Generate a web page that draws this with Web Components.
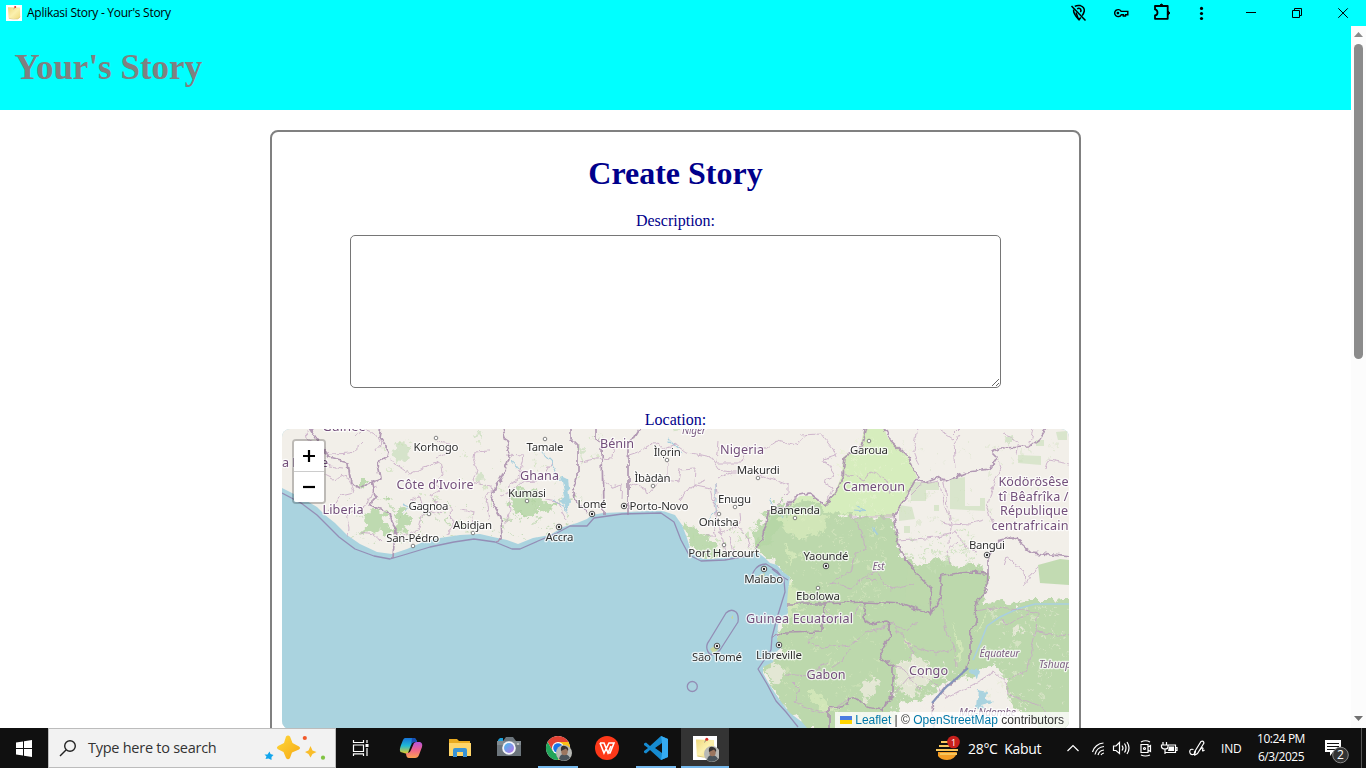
<!DOCTYPE html>
<html lang="id">
<head>
<meta charset="utf-8">
<title>Aplikasi Story - Your's Story</title>
<style>
html,body{margin:0;height:100%;overflow:hidden;background:#fff}
body{font-family:"Liberation Serif",serif}
</style>
</head>
<body>
<story-desktop></story-desktop>
<script>
const define = (name, html, after) => customElements.define(name, class extends HTMLElement {
  constructor() {
    super();
    const t = document.createElement('template');
    t.innerHTML = html;
    this.attachShadow({mode: 'open'}).append(t.content.cloneNode(true));
    if (after) after(this.shadowRoot, this);
  }
});

define('note-icon', `<style>:host{display:block;width:16px;height:16px}svg{display:block;width:100%;height:100%}</style>
<svg viewBox="0 0 16 16"><defs><linearGradient id="n" x1="0" y1="0" x2="1" y2="1"><stop offset="0" stop-color="#eed77c"/><stop offset=".5" stop-color="#fbf0ae"/><stop offset="1" stop-color="#f0da7c"/></linearGradient></defs>
<rect width="16" height="16" fill="#fff"/><path d="M2 2.300 14 2.600 14.200 11.800Q13.500 13.600 11.600 14L2.600 13.600Z" fill="url(#n)"/><path d="M3 13.300Q7 14.600 11.600 14L14.200 11.800" fill="none" stroke="#cfb862" stroke-width=".5"/><path d="M8.600 2.700 7.700 4.300" stroke="#777" stroke-width=".5"/><circle cx="9.200" cy="2.100" r="1" fill="#d92a25"/></svg>`);

define('title-bar', `<style>
:host{display:flex;height:26px;background:#0ff;align-items:center;color:#000}
note-icon{margin-left:6px}
.t{margin-left:5px;font:12px/16px "Open Sans",sans-serif;letter-spacing:-.27px;white-space:nowrap;flex:1}
svg{display:block}
</style><note-icon></note-icon><span class="t">Aplikasi Story - Your's Story</span>
<svg width="296" height="26" viewBox="1070 0 296 26" fill="none" stroke="#000">
<g stroke-width="1.500"><path d="M1071.500 6 1085.500 20.500"/><path d="M1074.800 6.400Q1077 5 1080.300 5.600 1084.600 7 1084.300 11 1083.800 13.300 1082.200 15.600M1080.800 17.500 1079 19.800Q1073 13.500 1073.600 9.500"/><path d="M1077.200 9Q1078.800 7.600 1080.500 9 1081.600 10.800 1080.300 12M1076 12.500 1078.300 19"/></g>
<g stroke-width="1.400"><path d="M1121.200 11.400A3.500 3.500 0 1 0 1121.200 14.800H1123.300V16H1125.500V14.800H1127.800V11.400Z"/><circle cx="1117.900" cy="13.100" r="1.400" fill="#000" stroke="none"/></g>
<path d="M1155 6H1167.700V18.800H1155V15.500Q1157.500 15 1157.500 12.700 1157.500 10 1155 9.400Z" stroke-width="1.800" stroke-linejoin="round"/><path d="M1159.500 5.500Q1161.500 2.600 1163.300 5.500ZM1168 11Q1171.300 13 1168 15Z" fill="#000"/>
<g fill="#000" stroke="none"><circle cx="1201.500" cy="8.400" r="1.600"/><circle cx="1201.500" cy="13.500" r="1.600"/><circle cx="1201.500" cy="18.500" r="1.600"/></g>
<path d="M1246 12.500H1256M1292.500 10.500H1299.500V17.500H1292.500ZM1294.500 10.500V8.500H1301.500V15.500H1299.500M1338.300 8.300 1347.800 17.800M1347.800 8.300 1338.300 17.800"/></svg>`);

define('app-header', `<style>:host{display:flex;align-items:center;height:84px;background:#0ff;padding-left:14.500px}
h1{margin:0;color:#808080;font:bold 35px/40px "Liberation Serif",serif;white-space:nowrap}</style><h1><slot></slot></h1>`);

define('page-scrollbar', `<style>:host{display:flex;flex-direction:column;width:15px;background:#fcfcfc;align-items:center}
.th{width:9px;height:315px;border-radius:5px;background:#8b8b8b}.g{flex:1}svg{display:block;height:18px}</style>
<svg width="15" height="18"><path d="M3 11 7.500 6 12 11Z" fill="#8b8b8b"/></svg><div class="th"></div><div class="g"></div><svg width="15" height="18"><path d="M3 6 7.500 11 12 6Z" fill="#707070"/></svg>`);

define('form-field', `<style>:host{display:flex;flex-direction:column;align-items:center}
label{font:16px/18px "Liberation Serif",serif;color:#00008b}</style><label></label><slot></slot>`, (r, h) => { r.querySelector('label').textContent = h.getAttribute('label'); });

define('story-textarea', `<style>:host{display:block;margin-top:5px}
textarea{display:block;box-sizing:border-box;width:651px;height:153px;margin:0;border:1px solid #767676;border-radius:5px;background:#fff;outline:0;resize:vertical}</style><textarea aria-label="Description"></textarea>`);

define('map-zoom', `<style>:host{display:flex;flex-direction:column;border:2px solid rgba(0,0,0,.22);border-radius:4px;background-clip:padding-box}
b{display:flex;align-items:center;justify-content:center;width:30px;height:30px;background:#fff;border-radius:0 0 2px 2px}
b:first-of-type{border-bottom:1px solid #ccc;border-radius:2px 2px 0 0}</style>
<b><svg width="14" height="14"><path d="M1 7H13M7 1V13" stroke="#000" stroke-width="2.200"/></svg></b><b><svg width="14" height="14"><path d="M1 7H13" stroke="#000" stroke-width="2.200"/></svg></b>`);

define('map-credit', `<style>:host{display:flex;align-items:center;height:16px;padding:0 5px;background:rgba(255,255,255,.8);font:12px/16px "Liberation Sans",sans-serif;color:#333;white-space:pre}
a{color:#0078a8}svg{margin-right:3px}</style><svg width="12" height="8"><path fill="#4c7be1" d="M0 0h12v4H0z"/><path fill="#ffd500" d="M0 4h12v4H0z"/></svg><a>Leaflet</a><span> | © </span><a>OpenStreetMap</a><span> contributors</span>`);

const SEA = 'M282 488 300 497 317 507 325 515 335 523 347 535 360 544 377 552 392 554 407 549 423 542 440 538 460 535 480 534 493 537 507 540 518 544 533 538 550 535 563 527 577 523 587 519 592 515 603 513 627 512 647 511 663 511 675 515 682 525 687 538 690 548 695 555 703 559 713 559 727 557 747 555 757 552 765 558 770 563 777 565 783 572 790 577 788 590 787 603 788 613 778 625 777 640 782 647 775 653 773 662 763 667 763 673 768 682 775 693 782 703 790 713 802 722 807 728H282Z';
const GREEN = 'M783 510 802 500 819 505 829 513 850 516 892 517 897 545 908 562 925 563 940 558 955 566 967 563 980 568 987 573 987 592 983 605 1000 600 1013 605 1031 600 1052 600 1072 598V731H1040L1030 715 1010 707 1006 680 993 664 984 668 969 678 953 682 945 683 936 692 920 700 902 703 886 731H807L802 722 790 713 775 693 763 667 773 662 782 647 777 640 778 625 788 613 787 603 790 577 777 565 768 558 756 549 763 537 770 512Z';
const LIGHT = 'M865 426 860 447 843 457 842 475 835 492 823 505 812 496 800 496 789 505 780 512 783 525 795 520 804 531 835 515 892 517 903 502 917 477 908 457 888 438 883 426Z';

define('story-map', `<style>
:host{display:grid;width:787px;height:300px;border-radius:8px;overflow:hidden;position:relative;background:#aad3df}
svg{display:block}
map-zoom{position:absolute;left:10px;top:10px}
map-credit{position:absolute;right:0;top:283px}
text{font-family:"Noto Sans","Open Sans",sans-serif;fill:#303030;paint-order:stroke;stroke:#fff;stroke-opacity:.75;stroke-width:2.500px;stroke-linejoin:round;text-anchor:middle}
</style>
<svg width="787" height="299" viewBox="282 429 787 299">
<defs>
<filter id="rough" filterUnits="userSpaceOnUse" x="270" y="415" width="810" height="325"><feTurbulence type="fractalNoise" baseFrequency=".11" numOctaves="3" seed="4" result="n"/><feDisplacementMap in="SourceGraphic" in2="n" scale="7" xChannelSelector="R" yChannelSelector="G"/></filter>
<filter id="ragged" filterUnits="userSpaceOnUse" x="270" y="415" width="810" height="325"><feTurbulence type="fractalNoise" baseFrequency=".13" numOctaves="4" seed="9" result="n"/><feDisplacementMap in="SourceGraphic" in2="n" scale="15" xChannelSelector="R" yChannelSelector="G"/></filter>
</defs>
<rect x="282" y="429" width="787" height="299" fill="#f2efe9"/>
<path d="${LIGHT}" fill="#d6edbd"/>
<g filter="url(#ragged)"><path d="${GREEN}" fill="#bcd8ac"/>
<g fill="#b5d6a6" opacity=".85"><path d="M508 493 525 487 541 493 542 504 533 518 517 515 509 508ZM364 513 378 509 387 514 382 522 393 529 397 524 403 530 388 534 373 532 362 535ZM384 498 390 496 392 501 386 503ZM395 511 403 508 409 518 408 532 397 526ZM358 480 367 480 366 485 358 487ZM541 503 552 501 551 512 541 509ZM683 523 704 534 717 543 722 553 733 557 703 558 690 547ZM762 512 772 507 783 498 784 524 766 545 756 547 754 526 768 522Z"/>
<path d="M396 442 407 444 409 457 402 463 392 454ZM472 432 480 434 479 439ZM476 473 482 472 484 480 477 479ZM670 426H683L678 432ZM579 452 583 446 582 466ZM1004 435 1012 438 1010 446Z" opacity=".55"/></g>
<g id="tex"></g></g>
<path d="M1018 455 1041 456V465L1018 463ZM950 479 965 477V506H980V498H985V511L950 509ZM910 482 939 482V490H926V501H911ZM934 505H939V511H934ZM899 505 912 507 915 519 899 521ZM904 526H910V533H904ZM1036 440H1044V446H1036ZM1056 432 1067 431V440H1058Z" fill="#c5ddb5" opacity=".55"/>
<path d="M1038 565 1060 559 1069 560V585L1040 583ZM908 566 912 570 930 587V608L905 600Z" fill="#bcd8ac" opacity=".9"/>
<path d="${SEA}" fill="#aad3df"/>
<g fill="none" stroke="#a4cddd" stroke-width="1.100" filter="url(#rough)"><path d="M540 451 552 463 557 477 563 481 567 500 569 511 554 500M511 460 519 469M402 515 410 506 402 503M856 505 865 511 855 510M667 438 672 443 683 453M716 483V510L709 520M769 498 778 510 783 518M872 527 878 536"/></g>
<path d="M1072 604H1035L1017 609 1000 617 987 626 980 644 973 660" fill="none" stroke="#a9cfe0" stroke-width="1.500"/>
<g fill="#aad3df" filter="url(#rough)"><path d="M561 476 567 479 570 503 567 509 559 500 565 497ZM972 668 979 670 977 678 970 674ZM977 690 988 692 986 698 993 703 982 706 985 710 975 707Z"/></g>
<g fill="none" stroke="#c6a8c5" stroke-width=".9" opacity=".9" filter="url(#rough)">
<path d="M306 429 307 440 323 447 330 454 352 453 364 442M355 436 362 430 374 434 382 444 376 451M320 457 329 466 344 468M322 474 334 480 346 475 354 491 341 494 335 504 328 512M349 537 350 528 347 510 356 513 367 505 374 488 378 487M359 532 373 534 382 542M390 461 401 467 411 474 423 468 440 462 442 473 435 479 439 491 431 495 436 504M410 500 420 497 424 512 420 528 402 537M430 510 442 513 451 506 452 526 448 534M460 509 474 512 472 523 481 527 479 531M489 520 486 498 493 488 474 481 478 470 473 460 474 452 490 451M438 441 449 443 448 453 438 458M506 455 523 456 518 480 508 486M501 496 508 493 521 482 538 481 546 473 552 463M545 500 557 502 567 520M509 493 511 511 504 527M580 462 601 458M602 457 613 458 614 448M602 479 613 487 623 484 622 500M626 456 638 452 656 442 664 449 676 444 687 452 710 457 718 469 731 471M628 482 645 489 647 495 662 479 678 482 680 470 697 469 696 485 710 488 712 500 721 509M667 463 667 480M680 501 690 487 705 481M718 441 716 463 741 463 744 452M718 479 731 472 754 472 788 485 788 494 777 505M716 483 717 494 714 503 717 521 722 532 741 524 740 514M720 531 725 552M730 537 734 554M738 525 745 533 750 548M704 535 716 535 711 523M746 447 767 448 778 440 796 445 808 434M800 435 821 434 833 449 836 456 824 460 834 476 823 482 833 488 827 500M842 472 855 477 864 481 871 472 888 480 890 493M850 517 892 517M917 429 913 450 919 466M954 445 956 469M960 434 953 443M1003 434 1019 441 1016 454M1045 470 1048 460 1069 464M997 458 1001 470 993 485 987 508 993 525M943 477 947 499 950 519M900 505 920 485 939 481 943 500 950 523 971 524 985 520M940 521 950 524 949 544M899 540 937 537 957 532 966 547 978 551M957 542 947 551 950 565M850 517 856 522 862 533 865 548 855 554 850 572 829 583M831 582 850 588 864 577 875 571 890 590 915 584M825 609 833 618 852 617 862 605M815 632 808 642 823 648 850 645 866 632 893 624 906 631 918 623M867 577 876 583M940 598 946 632 955 647 956 668M953 648 936 654 907 643 896 628M905 640 915 654 908 660M976 611 993 608 1023 610 1037 614 1036 632 1069 636M1036 632 1030 655 1026 672 1008 679M1002 617 1003 625 1030 614M893 695 909 677 924 676 939 688 946 699 976 683 993 672 1007 685 1008 695 1036 704 1048 714 1069 720M893 667 903 668 920 690M940 430 952 438 959 431M1033 429 1029 446M1024 588 1030 575 1039 569M850 649 843 661 831 668M786 674 807 676 828 663M792 682 800 690 793 703 803 707 826 713 852 697M1003 565 1006 556 1024 570 1025 585"/>
</g>
<g fill="none" stroke="#ab8fae" stroke-width="1.700" stroke-linejoin="round" opacity=".9" filter="url(#rough)">
<path d="M308 426 323 448 330 458 348 463 351 483 360 488 380 478 377 463 387 457 388 450 380 438 382 426M372 480 375 497 370 505 390 512 392 522 396 528 394 558M502 426 510 452 502 476 493 492 492 502 501 517 502 539 495 541M570 426 570 438 577 445 577 478 573 488 575 498 588 514M595 426 595 437 602 442 603 515M641 426 628 448 628 514M867 426 862 447 845 457 843 475 836 492 824 505 809 493 796 496 788 505 770 512 763 535 757 548M883 426 888 438 908 457 917 477 903 502 893 516 897 535 900 550 908 562 915 573 930 587 931 615 940 597 942 575 970 572 988 573 987 590 977 602 975 620 970 637 970 657 967 668 957 678 945 688 932 703 934 731M917 480 925 483 940 477 947 481 967 472 990 469 998 457 993 452 1000 448 1028 447 1040 438 1048 426M988 573V557L1000 540 1013 537 1032 553 1072 557M788 604H822L865 602 903 604 931 614M865 603 863 617 868 625 888 623 892 637 880 650 882 658 893 667V697L885 703 882 710 867 707 857 697 848 699 847 705 829 708 829 731M823 604V631L786 632 772 638"/>
</g>
<g fill="none" stroke="#9186b1" stroke-width="1.300" stroke-linejoin="round" opacity=".9"><path d="M282 493 301 503 317 515 339 537 355 549 374 556 390 559 407 554 430 547 454 542 474 539 495 542 512 549 520 549 538 541 557 533 570 526 587 526 594 518 622 514 661 513 674 522 681 540 689 555 701 561 725 560 752 555M751 577 754 571Q758 564 766 564L777 571 784 580 785 592 777 618 772 637 771 650 758 669 767 684 776 701 786 712 798 727M772 569 781 576 788 580"/>
<path d="M726 613Q731 608 736 612 739 615 738 622L720 650Q710 660 707 649 706 645 709 641Z"/><circle cx="692.300" cy="686.500" r="5"/></g>
<path d="M932 703 945 688 957 678 968 668" fill="none" stroke="#8494bb" stroke-width="2"/>
<path d="M710 649 716 645 718 650 713 653ZM731 618 733 615 733 619ZM758 576 765 573 762 582Z" fill="#c8d69d"/>
<g id="dots"></g><g id="labels"></g>
</svg><map-zoom></map-zoom><map-credit></map-credit>`, r => {
  const NS = 'http://www.w3.org/2000/svg';
  const el = (n, a, p) => { const e = document.createElementNS(NS, n); for (const k in a) e.setAttribute(k, a[k]); p.append(e); return e; };
  // Small woodland and clearing patches scattered over the land.
  let s = 7; const rnd = () => (s = (s * 16807) % 2147483647) / 2147483647;
  const tex = r.getElementById('tex');
  const scatter = (n, x, y, w, h, fill, o) => { let d = ''; for (let i = 0; i < n; i++) { const a = x + rnd() * w, b = y + rnd() * h, q = .7 + rnd() * 2.3; d += `M${a.toFixed(1)} ${b.toFixed(1)}l${q.toFixed(1)} ${(rnd() * 2 - 1).toFixed(1)} ${(rnd() * 2).toFixed(1)} ${q.toFixed(1)} ${(-q).toFixed(1)} ${rnd().toFixed(1)}z`; } el('path', {d, fill, opacity: o}, tex); };
  scatter(90, 340, 495, 240, 50, '#add19e', .6);
  scatter(45, 380, 435, 220, 60, '#c8e0b5', .6);
  scatter(50, 682, 520, 75, 36, '#b9dba8', .6);
  scatter(150, 790, 515, 95, 100, '#dbe9c3', .55);
  scatter(90, 780, 620, 100, 105, '#dbeac2', .45);
  scatter(110, 985, 605, 84, 100, '#e2ead0', .6);
  scatter(80, 900, 530, 75, 40, '#c8dfb8', .7);
  scatter(60, 900, 440, 160, 80, '#d5e4c6', .5);
  scatter(60, 890, 660, 65, 55, '#f2efe9', .8);
  scatter(70, 835, 440, 70, 75, '#e4f2cd', .6);
  el('path', {d: 'M865 683 873 676 880 682 874 692 868 700 860 695ZM893 667 915 657 930 663 935 674 921 690 902 698ZM766 670 779 665 785 672 774 687ZM1010 630 1020 628 1024 632 1015 635Z', fill: '#f0ece2', opacity: .75}, tex);
  el('path', {d: 'M780 520 800 512 830 515 826 530 800 540 785 530ZM780 572 793 580 797 606 790 620 787 600ZM805 690 817 692 828 704 840 709 823 711ZM952 620 958 645 957 668 963 650ZM785 545 800 553 790 565ZM990 611 984 620 975 635 980 622ZM903 636 912 644 906 646Z', fill: '#dceebf', opacity: .65}, tex);
  const dots = r.getElementById('dots');
  [[436, 438], [545, 439], [527, 501], [429, 514], [473, 533], [413, 546], [667, 460], [653, 486], [758, 478], [735, 507], [719, 514], [724, 545], [869, 441], [795, 518], [818, 588]].forEach(([x, y]) => el('circle', {cx: x, cy: y, r: 1.8, fill: '#fff', stroke: '#666', 'stroke-width': .8}, dots));
  [[559, 527], [592, 514], [624, 506], [764, 569], [826, 566], [987, 555], [717, 646], [779, 645]].forEach(([x, y]) => { el('circle', {cx: x, cy: y, r: 2.8, fill: '#fff', stroke: '#444', 'stroke-width': .9}, dots); el('circle', {cx: x, cy: y, r: 1.2, fill: '#222'}, dots); });
  const labels = r.getElementById('labels');
  const put = (list, attrs) => list.forEach(([t, x, y, w, anchor]) => { const e = el('text', {x, y, textLength: w, ...attrs}, labels); if (anchor) e.style.textAnchor = anchor; if (attrs.fill) e.style.fill = attrs.fill; e.textContent = t; });
  put([['Korhogo', 436, 450.5, 45], ['Tamale', 545, 451, 37], ['Kumasi', 527, 497, 38], ['Gagnoa', 428.5, 510, 40], ['Abidjan', 472.5, 528.5, 39], ['San-Pédro', 412.7, 541.5, 53], ['Accra', 559.5, 541, 28], ['Lomé', 592, 508, 29], ['Ìlọrin', 667.3, 456, 27], ['Ìbàdàn', 652.5, 481.5, 36], ['Porto-Novo', 659, 509.7, 59], ['Makurdi', 758.3, 473.5, 43], ['Enugu', 734.5, 503, 33], ['Onitsha', 718.7, 526, 40], ['Port Harcourt', 723.7, 557, 71], ['Bamenda', 795, 514, 50], ['Malabo', 763.7, 583.3, 39], ['Garoua', 869, 453.7, 38], ['Yaoundé', 826, 560, 45], ['Bangui', 987, 548.7, 36], ['Ebolowa', 818, 600, 44], ['São Tomé', 717, 661, 50], ['Libreville', 779, 659.3, 46]], {'font-size': 11.5});
  put([['Guinée', 344, 431, 43], ['Côte d’Ivoire', 435, 488.7, 77], ['Liberia', 343, 513.7, 41], ['Ghana', 539.5, 479.7, 39], ['Bénin', 617, 448, 34], ['Nigeria', 742, 454, 44], ['Cameroun', 874, 490.7, 62], ['Guinea Ecuatorial', 799.5, 622.7, 107], ['Gabon', 826, 679.3, 39], ['Congo', 928.5, 675.3, 39], ['Ködörösêse', 1068.5, 485.5, 70, 'end'], ['tî Bêafrîka /', 1068.5, 500.5, 70, 'end'], ['République', 1068, 515.3, 68, 'end'], ['centrafricain', 1068.5, 530.3, 77, 'end'], ['a Leone', 282, 467, 46, 'start']], {'font-size': 12.6, fill: '#734f7b'});
  put([['Niger', 694, 434, 24], ['Est', 878.5, 570, 12], ['Équateur', 999.5, 657, 40], ['Tshuapa', 1039, 668, 38, 'start'], ['Mai-Ndombe', 987.5, 716, 57]], {'font-size': 10.4, 'font-style': 'italic', fill: '#7d5f83'});
});

define('story-card', `<style>:host{display:flex;flex-direction:column;align-items:center;box-sizing:border-box;width:811px;height:900px;border:2px solid #808080;border-radius:8px;padding:0 10px;background:#fff}
h2{margin:23px 0 21px;font:bold 32px/36px "Liberation Serif",serif;color:#00008b}
form-field+form-field{margin-top:23px}</style>
<h2>Create Story</h2><form-field label="Description:"><story-textarea></story-textarea></form-field><form-field label="Location:"><story-map></story-map></form-field>`);

define('search-box', `<style>:host{display:flex;box-sizing:border-box;width:288px;height:40px;border:1px solid #bcbcbc;background:#f2f2f2;align-items:center;padding-left:10px}
span{font:14.500px/20px "Open Sans",sans-serif;letter-spacing:-.26px;color:#333;margin-left:11px;flex:1;white-space:nowrap}svg{display:block}.s{margin-right:9px}</style>
<svg width="18" height="18" fill="none" stroke="#222" stroke-width="1.400"><circle cx="11" cy="7" r="5.300"/><path d="M7 11 1 17"/></svg><span>Type here to search</span>
<svg class="s" width="62" height="30" viewBox="264 733 62 30"><defs><linearGradient id="y" x2="1" y2="1"><stop stop-color="#ffd83b"/><stop offset="1" stop-color="#f5a914"/></linearGradient></defs><path fill="url(#y)" d="M286 736.500Q288 734.500 290 736.500L292.500 743 299 746.500Q301 748 299 749.500L292 752.500 290 758Q288 760.500 286 758L283.500 752 277.500 749Q276 747.500 278 746L284 743Z"/><path fill="#f9bd2a" d="M310.500 746 312.500 750.500 316.500 752 312.500 754 310.500 757.500 308.500 754 305 752 308.500 750.500Z"/><path d="M269.500 751.500 270.500 754 273.500 755 271.500 757 271.500 760 268.500 758.500 265.500 759 266.500 756.500 264.500 754.500 267.500 754.500Z" fill="#12a5ec"/><circle cx="304.800" cy="738" r="2.100" fill="#f1592a"/><circle cx="323" cy="757.700" r="2.100" fill="#80c342"/></svg>`);

define('task-button', `<style>:host{display:flex;align-items:center;justify-content:center;box-sizing:border-box;width:49px;height:40px}
:host([open]){background:linear-gradient(#76b9ed,#76b9ed) center bottom/40px 2px no-repeat}
:host([active]){background:linear-gradient(#76b9ed,#76b9ed) bottom/100% 2px no-repeat,#343434;width:48px}</style><slot></slot>`);

const AVATAR = '<circle cx="19" cy="19" r="8" fill="#b8b9b5"/><path d="M14 25Q15 20 19 20T25 24Q19 29 14 25" fill="#4a545b"/><ellipse cx="19.500" cy="17" rx="3.300" ry="4.300" fill="#9b765f"/><path d="M16 17Q15 11 20 12 24 13 23 17L21 14.500Z" fill="#373333"/>';
define('task-bar', `<style>:host{display:flex;height:40px;background:#101010;color:#fff;font-family:"Open Sans",sans-serif}
svg{display:block}.start{width:48px;display:flex;align-items:center;justify-content:center}
.apps{display:flex;flex:1}.tray{display:flex;align-items:center}
.w{font-size:14px;letter-spacing:-.3px;white-space:pre;width:85px}.l{font-size:12px;width:30px;letter-spacing:-.2px;margin-left:1px}
.c{font-size:12px;line-height:18px;text-align:center;width:60px;letter-spacing:-.48px;white-space:nowrap}.n{margin-left:12px;margin-right:11px}.e{height:40px;border-left:1px solid #555;width:4px}
.app{width:28px;height:28px;position:relative;display:block}.app note-icon{width:24px;height:24px;margin:2px}.app svg{position:absolute;left:0;top:0}
</style>
<div class="start"><svg width="17" height="17" fill="#fff"><path d="M0 2.500 7 1.500V8H0ZM8 1.300 16 0V8H8ZM0 9H7V15.500L0 14.500ZM8 9H16V17L8 15.700Z"/></svg></div><search-box></search-box>
<div class="apps">
<task-button><svg width="18" height="18" fill="none" stroke="#fff" stroke-width="1.200"><path d="M1.500 1V3.500H11.500V1M1.500 6H11.500V12.500H1.500ZM1.500 17V14.800H11.500V17M15 1V4M15 9V17"/><path d="M13.500 5H16.500V8H13.500Z" fill="#fff" stroke="none"/></svg></task-button>
<task-button style="width:51px"><svg width="24" height="24" viewBox="0 0 24 24"><defs><linearGradient id="a" y2="1" x2="0"><stop stop-color="#1773d9"/><stop offset=".5" stop-color="#20b9d6"/><stop offset="1" stop-color="#e3cb25"/></linearGradient><linearGradient id="b" y2="1" x2="0"><stop stop-color="#b454e0"/><stop offset=".5" stop-color="#f0638b"/><stop offset="1" stop-color="#fca04f"/></linearGradient></defs><path d="M6 2H15Q17 2 18 6H15Q13 6 12 9L9 17Q8 18 5 17L1.500 16Q0 14 2 9L4 4Q5 2 6 2" fill="url(#a)"/><path d="M18 6H21Q24 7 23 11L20 19Q19 22 16 22H10Q7 22 7 17H9Q11 17 12 14L15 7Q16 6 18 6" fill="url(#b)"/><path d="M13 2H15Q17 2 18 6H15Q13 6 12 9Z" fill="#174fb4"/></svg></task-button>
<task-button style="width:48px"><svg width="22" height="20"><path d="M0 1H8L10 3H21V18H0Z" fill="#e9aa20"/><path d="M0 5H22V18H0Z" fill="#ffd569"/><path d="M4 19V12Q4 10 6 10H16Q18 10 18 12V19H14V14H8V19Z" fill="#3993d5"/></svg></task-button>
<task-button><svg width="26" height="22"><path d="M2 3 4 1H7V5H2Z" fill="#1aa0da"/><path d="M10 0H17L20 4H25V19H1V4H7Z" fill="#6c757c"/><path d="M1 4H25V8H1Z" fill="#828b91"/><circle cx="13" cy="11" r="6.800" fill="#f4f5fa"/><defs><linearGradient id="q" x2="1" y2="1"><stop stop-color="#44bdec"/><stop offset="1" stop-color="#bd70e5"/></linearGradient></defs><circle cx="13" cy="11" r="5" fill="url(#q)"/><circle cx="22" cy="7" r="1" fill="#ccc"/></svg></task-button>
<task-button open><svg width="28" height="28" viewBox="-1 0 28 28"><circle cx="13" cy="14" r="12" fill="#fff"/><path d="M2.600 8A12 12 0 0 1 23.400 8H13L7.800 17Z" fill="#e34133"/><path d="M23.400 8A12 12 0 0 1 13 26L18.200 17 13 8Z" fill="#fbc116"/><path d="M2.600 8A12 12 0 0 0 13 26L18.200 17H7.800Z" fill="#22a55a"/><circle cx="13" cy="14" r="6" fill="#fff"/><circle cx="13" cy="14" r="4.800" fill="#1a73e8"/>${AVATAR}</svg></task-button>
<task-button><svg width="24" height="24"><circle cx="12" cy="12" r="12" fill="#fd3819"/><path d="M5 7H9L13 17 16 10M5 7 9 17 14 7H19L15 17H13" stroke="#fff" stroke-width="1.600" fill="none"/></svg></task-button>
<task-button open><svg width="24" height="24"><path d="M17 0 24 3V21L17 24 6 14 2 17.500 0 16.500V15L4 12 0 9V7.500L2 6.500 6 10ZM18 7 11 12 18 17Z" fill="#168bd1" fill-rule="evenodd"/><path d="M17 0 24 3V21L17 24 18 18V6Z" fill="#35abf2"/></svg></task-button>
<task-button active style="margin-left:1px"><div class="app"><note-icon></note-icon><svg width="28" height="28"><g transform="translate(2 1)">${AVATAR}</g></svg></div></task-button>
</div>
<div class="tray"><svg width="31" height="40" viewBox="935 728 31 40"><path d="M938 752H957Q955 760 947 760 941 760 938 756" fill="#f59e25"/><path d="M941 742H951M939 746H952M936 750H958M940 754H957" stroke="#f7c65d" stroke-width="2"/><circle cx="953.500" cy="742" r="6.300" fill="#c8201c"/><text x="953.500" y="745.600" text-anchor="middle" font-size="9" fill="#fff">1</text></svg>
<span class="w" style="margin-left:2px">28°C  Kabut</span>
<svg width="167" height="40" viewBox="1053 728 167 40" fill="none" stroke="#fff" stroke-width="1.200"><path d="M1067.500 751 1073 745.500 1078.500 751"/><path d="M1092.500 752A12 12 0 0 1 1103.500 743M1095 754.500A10 10 0 0 1 1104 746.500M1098 755A7 7 0 0 1 1104 750M1101 755A4 4 0 0 1 1104 753"/><path d="M1113.500 746H1116L1119.500 742.500V753.500L1116 750.500H1113.500ZM1122 745.500Q1124 748 1122 750.500M1124.500 743.500Q1127.500 748 1124.500 752.500M1127 742Q1131 748 1127 754"/><path d="M1141 744.500H1148V752.500H1141ZM1148 747 1150.500 745.500V751.500L1148 750M1141 742Q1145.500 739.500 1150 742M1141 755Q1145.500 757 1150 755"/><circle cx="1144.500" cy="748.500" r="1"/><path d="M1168 745H1175.500V752.500H1165.500M1175.500 747.500H1177V750.500H1175.500M1163 742V745M1166.500 742V745M1161.500 745H1168V747Q1168 749 1165 749T1161.500 747ZM1165 749V754"/><path fill="#fff" stroke="none" d="M1169 746.500H1174V751H1168Z"/><path d="M1193.500 749.500Q1190 748.500 1189.700 751.500 1190 755 1193 754.500 1195.500 754 1195.500 751M1194.500 752 1201 741.500Q1203.500 740.500 1204 743L1197.500 753.500 1194.800 755ZM1200 750Q1202 746.500 1203 748.500 1201.500 752.500 1204.500 750"/></svg>
<span class="l">IND</span><div class="c">10:24 PM<br>6/3/2025</div>
<svg class="n" width="27" height="36" viewBox="1323 730 27 36"><path d="M1325 740H1341V752H1333L1330 756V752H1325Z" fill="#fff"/><path d="M1327 743.500H1339M1327 746.500H1339M1327 749.500H1336" stroke="#111"/><circle cx="1340.500" cy="755" r="7.800" fill="#333" stroke="#888"/><text x="1340.500" y="759.300" text-anchor="middle" font-size="12" fill="#fff">2</text></svg><div class="e"></div></div>`);

define('story-desktop', `<style>:host{display:flex;flex-direction:column;width:1366px;height:768px;overflow:hidden}
.m{display:flex;flex:1;min-height:0}.p{flex:1;display:flex;flex-direction:column;overflow:hidden;background:#fff}
.b{display:flex;justify-content:center;padding-top:20px}task-bar{flex:none}story-card{flex:none}app-header,title-bar{flex:none}</style>
<title-bar></title-bar><div class="m"><div class="p"><app-header>Your's Story</app-header><div class="b"><story-card></story-card></div></div><page-scrollbar></page-scrollbar></div><task-bar></task-bar>`);
</script>
</body>
</html>
